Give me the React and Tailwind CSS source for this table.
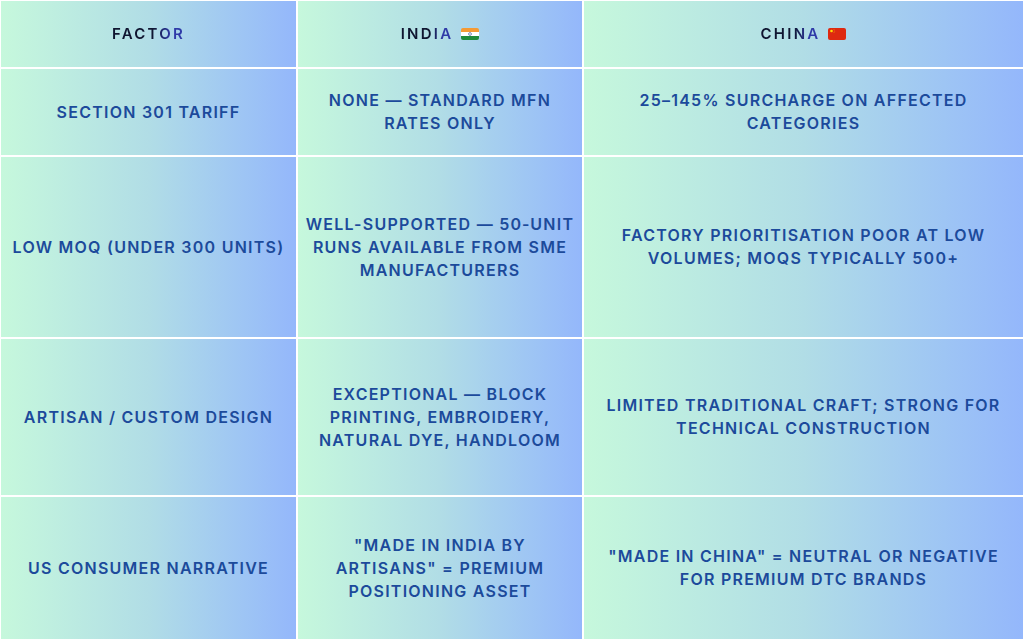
const ROWS = [
  {
    factor: "Section 301 tariff",
    india: "None — standard MFN\nrates only",
    china: "25–145% surcharge on affected\ncategories",
  },
  {
    factor: "Low MOQ (under 300 units)",
    india: "Well-supported — 50\u2011unit\nruns available from SME\nmanufacturers",
    china: "Factory prioritisation poor at low\nvolumes; MOQs typically 500+",
  },
  {
    factor: "Artisan / custom design",
    india: "Exceptional — block\nprinting, embroidery,\nnatural dye, handloom",
    china: "Limited traditional craft; strong for\ntechnical construction",
  },
  {
    factor: "US consumer narrative",
    india: '"Made in India by\nartisans" = premium\npositioning asset',
    china: '"Made in China" = neutral or negative\nfor premium DTC brands',
  },
]

function IndiaFlag() {
  return (
    <svg width="18" height="12" viewBox="0 0 18 12" className="inline-block rounded-[2px]">
      <rect width="18" height="4" fill="#f59a33" />
      <rect y="4" width="18" height="4" fill="#ffffff" />
      <rect y="8" width="18" height="4" fill="#1f8a3a" />
      <circle cx="9" cy="6" r="1.4" fill="none" stroke="#1e3a8a" strokeWidth="0.6" />
    </svg>
  )
}

function ChinaFlag() {
  return (
    <svg width="18" height="12" viewBox="0 0 18 12" className="inline-block rounded-[2px]">
      <rect width="18" height="12" fill="#de2910" />
      <circle cx="3.5" cy="3" r="1.3" fill="#ffde00" />
      <circle cx="6" cy="1.6" r="0.4" fill="#ffde00" />
      <circle cx="6.8" cy="3" r="0.4" fill="#ffde00" />
      <circle cx="6" cy="4.4" r="0.4" fill="#ffde00" />
    </svg>
  )
}

function Cell({ children, head }) {
  return (
    <div className="flex items-center justify-center bg-gradient-to-r from-[#c6f8dc] via-[#b1dde6] to-[#94b7fb] px-1 text-center">
      {head ? (
        <div className="flex items-center gap-2">{children}</div>
      ) : (
        <p className="whitespace-pre-line text-[16px] font-semibold uppercase leading-[23px] tracking-[0.078em] text-[#1c4a9b]">
          {children}
        </p>
      )}
    </div>
  )
}

function HeadText({ children }) {
  return (
    <span className="bg-gradient-to-r from-[#0f1530] from-55% to-[#2f3aa8] to-80% bg-clip-text text-[15px] font-semibold uppercase tracking-[0.15em] text-transparent">
      {children}
    </span>
  )
}

export default function App() {
  return (
    <div
      className="grid h-[640px] w-[1024px] grid-cols-[295px_284px_439px] grid-rows-[66px_86px_180px_156px_142px] gap-[2px] bg-white p-px"
      style={{ fontFamily: "Inter, 'Noto Sans', sans-serif" }}
    >
      <Cell head>
        <HeadText>Factor</HeadText>
      </Cell>
      <Cell head>
        <HeadText>India</HeadText>
        <IndiaFlag />
      </Cell>
      <Cell head>
        <HeadText>China</HeadText>
        <ChinaFlag />
      </Cell>

      {ROWS.map((row, i) => (
        <>
          <Cell key={`f${i}`}>{row.factor}</Cell>
          <Cell key={`i${i}`}>{row.india}</Cell>
          <Cell key={`c${i}`}>{row.china}</Cell>
        </>
      ))}
    </div>
  )
}
